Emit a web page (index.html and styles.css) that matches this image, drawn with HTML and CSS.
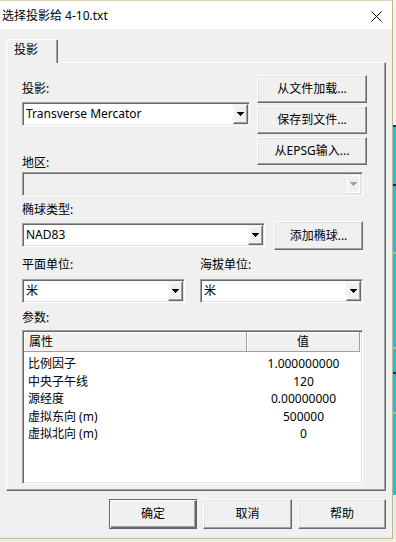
FILE: index.html
```html
<!DOCTYPE html>
<html lang="zh-CN">
<head>
    <meta charset="UTF-8">
    <meta name="viewport" content="width=device-width, initial-scale=1.0">
    <title>选择投影给 4-10.txt</title>
    <link rel="stylesheet" href="styles.css">
</head>
<body>
<div class="screen">
    <div class="window">
        <div class="titlebar">
            <span class="title">选择投影给 4-10.txt</span>
            <svg class="close" width="11" height="11" viewBox="0 0 11 11"><path d="M0.5 0.5L10.5 10.5M10.5 0.5L0.5 10.5" stroke="#000" stroke-width="1" fill="none"/></svg>
        </div>
        <div class="client">
            <div class="tabs"><div class="tab">投影</div></div>
            <div class="page">
                <div class="top-row">
                    <div class="top-left">
                        <div class="label first">投影:</div>
                        <div class="combo">
                            <span class="combo-text">Transverse Mercator</span>
                            <span class="drop"><svg width="7" height="4" viewBox="0 0 7 4"><path d="M0 0h7v1h-1v1h-1v1h-1v1h-1v-1h-1v-1h-1v-1h-1z" fill="#000"/></svg></span>
                        </div>
                        <div class="label region">地区:</div>
                    </div>
                    <div class="side-buttons">
                        <button class="btn">从文件加载...</button>
                        <button class="btn">保存到文件...</button>
                        <button class="btn">从EPSG输入...</button>
                    </div>
                </div>
                <div class="combo disabled wide">
                    <span class="combo-text"></span>
                    <span class="drop"><svg width="7" height="4" viewBox="0 0 7 4"><path d="M0 0h7v1h-1v1h-1v1h-1v1h-1v-1h-1v-1h-1v-1h-1z" fill="#a0a0a0"/></svg></span>
                </div>
                <div class="label gap6">椭球类型:</div>
                <div class="ellipsoid-row">
                    <div class="combo ellipsoid">
                        <span class="combo-text">NAD83</span>
                        <span class="drop"><svg width="7" height="4" viewBox="0 0 7 4"><path d="M0 0h7v1h-1v1h-1v1h-1v1h-1v-1h-1v-1h-1v-1h-1z" fill="#000"/></svg></span>
                    </div>
                    <button class="btn add">添加椭球...</button>
                </div>
                <div class="unit-labels">
                    <div class="label">平面单位:</div>
                    <div class="label">海拔单位:</div>
                </div>
                <div class="unit-row">
                    <div class="combo unit">
                        <span class="combo-text">米</span>
                        <span class="drop"><svg width="7" height="4" viewBox="0 0 7 4"><path d="M0 0h7v1h-1v1h-1v1h-1v1h-1v-1h-1v-1h-1v-1h-1z" fill="#000"/></svg></span>
                    </div>
                    <div class="combo unit">
                        <span class="combo-text">米</span>
                        <span class="drop"><svg width="7" height="4" viewBox="0 0 7 4"><path d="M0 0h7v1h-1v1h-1v1h-1v1h-1v-1h-1v-1h-1v-1h-1z" fill="#000"/></svg></span>
                    </div>
                </div>
                <div class="label gap7">参数:</div>
                <div class="list">
                    <div class="list-head">
                        <div class="hcell name">属性</div>
                        <div class="hcell value">值</div>
                    </div>
                    <div class="list-body">
                        <div class="cell name">比例因子</div><div class="cell value">1.000000000</div>
                        <div class="cell name">中央子午线</div><div class="cell value">120</div>
                        <div class="cell name">源经度</div><div class="cell value">0.00000000</div>
                        <div class="cell name">虚拟东向 (m)</div><div class="cell value">500000</div>
                        <div class="cell name">虚拟北向 (m)</div><div class="cell value">0</div>
                    </div>
                </div>
            </div>
            <div class="footer">
                <button class="btn default ok">确定</button>
                <button class="btn cancel">取消</button>
                <button class="btn help">帮助</button>
            </div>
        </div>
    </div>
    <div class="desk"></div>
</div>
</body>
</html>
```
FILE: styles.css
```css
*{
    box-sizing: border-box;
    margin:0;
    padding:0;
}
body{
    background:#efeedb;
    color:#000;
    font-family:"Noto Sans", "Noto Sans CJK SC", sans-serif;
    font-size:12px;
    line-height:16px;
}
.screen{
    display:flex;
    align-items:flex-start;
}
.window{
    width:393px;
    height:539px;
    display:flex;
    flex-direction:column;
    background:#f0f0f0;
    border-top:1px solid #d6d3ad;
    border-right:1px solid #bdb98e;
    border-bottom:1px solid #bdb98e;
}
.desk{
    width:3px;
    height:539px;
    background:linear-gradient(to bottom,
        #f4f4ee 0 125px, #1b3170 125px 127px,
        #1cc3d2 127px 184px, #1b2f5a 184px 186px,
        #1cc3d2 186px 252px, #c9b98a 252px 254px,
        #1cc3d2 254px 347px, #c9b98a 347px 349px,
        #1cc3d2 349px 372px, #1b2f5a 372px 374px,
        #1cc3d2 374px 412px, #c9b98a 412px 414px,
        #1cc3d2 414px 495px, #ecebe0 495px);
}

/* title bar */
.titlebar{
    height:28px;
    flex:none;
    background:#fff;
    display:flex;
    align-items:center;
    justify-content:space-between;
    padding:2px 10px 0 2px;
}
.close{
    display:block;
}

/* tab control */
.client{
    flex:1;
    display:flex;
    flex-direction:column;
}
.tabs{
    display:flex;
    padding:10px 0 0 6px;
}
.tab{
    position:relative;
    z-index:1;
    width:52px;
    height:24px;
    margin-bottom:-1px;
    padding:2px 0 0 7px;
    background:#f0f0f0;
    border-top:1px solid #fff;
    border-left:1px solid #fff;
    border-right:1px solid #696969;
    box-shadow:inset -1px 0 #a0a0a0;
}
.page{
    margin-left:6px;
    width:380px;
    height:429px;
    flex:none;
    padding:12px 18px 0 15px;
    border:1px solid;
    border-color:#fff #696969 #696969 #fff;
    box-shadow:inset -1px -1px #a0a0a0;
}

/* form */
.top-row{
    display:flex;
    justify-content:space-between;
}
.top-left{
    width:228px;
}
.label{
    height:16px;
    white-space:nowrap;
}
.label.first{
    margin-top:6px;
}
.label.region{
    margin-top:29px;
}
.label.gap6{
    margin-top:6px;
}
.label.gap7{
    margin-top:7px;
}
.side-buttons{
    width:110px;
    display:flex;
    flex-direction:column;
    gap:3px;
}
.btn{
    display:block;
    height:28px;
    font:inherit;
    color:#000;
    background:#f0f0f0;
    border:1px solid;
    border-color:#fff #696969 #696969 #fff;
    box-shadow:inset -1px -1px #a0a0a0, inset 1px 1px #e3e3e3;
    text-align:center;
    white-space:nowrap;
}

.combo{
    height:24px;
    margin-top:5px;
    display:flex;
    align-items:stretch;
    background:#fff;
    border:1px solid;
    border-color:#a0a0a0 #fff #fff #a0a0a0;
    box-shadow:inset 1px 1px #696969, inset -1px -1px #e3e3e3;
    padding:1px 1px 1px 3px;
}
.combo-text{
    flex:1;
    line-height:20px;
    white-space:nowrap;
    overflow:hidden;
}
.drop{
    width:15px;
    display:flex;
    align-items:center;
    justify-content:center;
    background:#f0f0f0;
    border:1px solid;
    border-color:#f0f0f0 #696969 #696969 #f0f0f0;
    box-shadow:inset -1px -1px #a0a0a0, inset 1px 1px #fff;
}
.drop svg{
    display:block;
}
.combo.disabled{
    background:#f0f0f0;
}
.combo.disabled .drop{
    border-color:#f0f0f0 #e3e3e3 #e3e3e3 #f0f0f0;
    box-shadow:inset -1px -1px #fff, inset 1px 1px #fff;
}
.combo.wide{
    width:341px;
    margin-top:1px;
}

.ellipsoid-row{
    width:341px;
    margin-top:3px;
    display:flex;
    justify-content:space-between;
    align-items:flex-start;
}
.combo.ellipsoid{
    width:243px;
    margin-top:2px;
}
.btn.add{
    width:89px;
    height:29px;
}

.unit-labels,
.unit-row{
    width:341px;
    display:flex;
    gap:15px;
}
.unit-labels{
    margin-top:7px;
}
.unit-labels .label{
    width:163px;
}
.unit-row{
    margin-top:1px;
}
.combo.unit{
    width:163px;
    margin-top:5px;
}

/* list view */
.list{
    width:341px;
    height:154px;
    margin-top:4px;
    padding:1px;
    background:#fff;
    border:1px solid;
    border-color:#a0a0a0 #fff #fff #a0a0a0;
    box-shadow:inset 1px 1px #696969, inset -1px -1px #e3e3e3;
}
.list-head{
    display:flex;
}
.hcell{
    height:20px;
    line-height:19px;
    background:#f0f0f0;
    border-right:1px solid #a0a0a0;
    border-bottom:1px solid #a0a0a0;
    box-shadow:inset 1px 1px #fff;
}
.hcell.name{
    width:223px;
    padding-left:5px;
}
.hcell.value{
    width:113px;
    text-align:center;
}
.list-body{
    display:grid;
    grid-template-columns:223px 113px;
    grid-auto-rows:17.5px;
    padding-top:3px;
}
.cell{
    line-height:17.5px;
    white-space:nowrap;
}
.cell.name{
    padding-left:4px;
}
.cell.value{
    text-align:center;
}

/* dialog buttons */
.footer{
    display:flex;
    justify-content:flex-end;
    gap:6px;
    padding:8px 6px 0 0;
}
.footer .btn{
    width:88px;
    height:30px;
}
.footer .btn.cancel{
    width:89px;
}
.btn.default{
    border:1px solid #646464;
    box-shadow:inset 1px 1px #fff, inset -1px -1px #696969, inset -2px -2px #a0a0a0;
}
```
